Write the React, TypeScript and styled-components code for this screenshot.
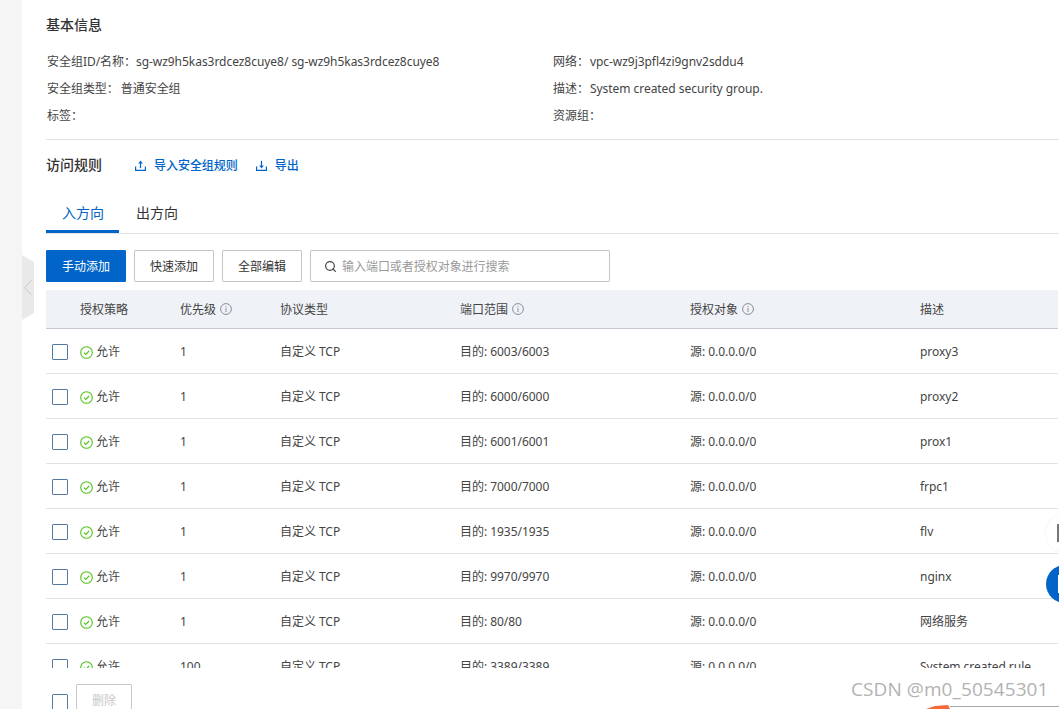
import styled, { createGlobalStyle } from "styled-components"
import { Search } from "lucide-react"

type Rule = {
  priority: string
  port: string
  desc: string
}

const rules: Rule[] = [
  { priority: "1", port: "6003/6003", desc: "proxy3" },
  { priority: "1", port: "6000/6000", desc: "proxy2" },
  { priority: "1", port: "6001/6001", desc: "prox1" },
  { priority: "1", port: "7000/7000", desc: "frpc1" },
  { priority: "1", port: "1935/1935", desc: "flv" },
  { priority: "1", port: "9970/9970", desc: "nginx" },
  { priority: "1", port: "80/80", desc: "网络服务" },
  { priority: "100", port: "3389/3389", desc: "System created rule." },
]

const InfoIcon = () => (
  <InfoSvg viewBox="0 0 12 12" width="12" height="12">
    <circle cx="6" cy="6" r="5.4" fill="none" stroke="#8a8f96" strokeWidth="1" />
    <path d="M6 5.2V9M6 3.2v1" stroke="#8a8f96" strokeWidth="1" fill="none" />
  </InfoSvg>
)

const AllowIcon = () => (
  <AllowSvg viewBox="0 0 13 13" width="13" height="13">
    <circle cx="6.5" cy="6.5" r="5.8" fill="none" stroke="#52c41a" strokeWidth="1.1" />
    <path d="M3.9 6.6l1.9 1.9 3.3-3.5" fill="none" stroke="#52c41a" strokeWidth="1.1" />
  </AllowSvg>
)

const UploadIcon = () => (
  <svg viewBox="0 0 11 11" width="11" height="11">
    <path d="M.6 6.5v3.9h9.8V6.5" fill="none" stroke="#0064c8" strokeWidth="1.2" />
    <path d="M5.5 8.2V2.5" fill="none" stroke="#0064c8" strokeWidth="1.2" />
    <path d="M5.5.6L7.8 3.4H3.2z" fill="#0064c8" />
  </svg>
)

const DownloadIcon = () => (
  <svg viewBox="0 0 11 11" width="11" height="11">
    <path d="M.6 6.5v3.9h9.8V6.5" fill="none" stroke="#0064c8" strokeWidth="1.2" />
    <path d="M5.5 .8v5" fill="none" stroke="#0064c8" strokeWidth="1.2" />
    <path d="M5.5 8.6L7.8 5.4H3.2z" fill="#0064c8" />
  </svg>
)

const RuleRow = ({ rule }: { rule: Rule }) => (
  <Row>
    <Checkbox />
    <Status>
      <AllowIcon />
      允许
    </Status>
    <Cell>{rule.priority}</Cell>
    <Cell>自定义 TCP</Cell>
    <Cell>目的: {rule.port}</Cell>
    <Cell>源: 0.0.0.0/0</Cell>
    <Cell>{rule.desc}</Cell>
  </Row>
)

export default function App() {
  return (
    <Page>
      <GlobalStyle />
      <Gutter />
      <Handle viewBox="0 0 12 65" width="12" height="65">
        <path d="M0 0l12 7v51l-12 7z" fill="#e9e9e9" />
        <path d="M9.5 25l-7 7.5 7 7.5" fill="none" stroke="#c9c9c9" strokeWidth="1" />
      </Handle>
      <Main>
        <SectionTitle>基本信息</SectionTitle>
        <InfoGrid>
          <InfoItem>安全组ID/名称：sg-wz9h5kas3rdcez8cuye8/ sg-wz9h5kas3rdcez8cuye8</InfoItem>
          <InfoItem>网络：<InfoValue $gap={1}>vpc-wz9j3pfl4zi9gnv2sddu4</InfoValue></InfoItem>
          <InfoItem>
            安全组类型：<InfoValue $gap={2}>普通安全组</InfoValue>
          </InfoItem>
          <InfoItem>描述：<InfoValue $gap={1}>System created security group.</InfoValue></InfoItem>
          <InfoItem>标签：</InfoItem>
          <InfoItem>资源组：</InfoItem>
        </InfoGrid>
        <Divider />
        <RulesHead>
          <RulesTitle>访问规则</RulesTitle>
          <RulesLink>
            <UploadIcon />
            导入安全组规则
          </RulesLink>
          <RulesLink>
            <DownloadIcon />
            导出
          </RulesLink>
        </RulesHead>
        <Tabs>
          <Tab $active>入方向</Tab>
          <Tab>出方向</Tab>
        </Tabs>
        <Toolbar>
          <Button $primary>手动添加</Button>
          <Button>快速添加</Button>
          <Button>全部编辑</Button>
          <SearchBox>
            <Search size={13} color="#444" strokeWidth={2.2} />
            <SearchText>输入端口或者授权对象进行搜索</SearchText>
          </SearchBox>
        </Toolbar>
        <HeadRow>
          <span />
          <HeadCell>授权策略</HeadCell>
          <HeadCell>
            优先级
            <InfoIcon />
          </HeadCell>
          <HeadCell>协议类型</HeadCell>
          <HeadCell>
            端口范围
            <InfoIcon />
          </HeadCell>
          <HeadCell>
            授权对象
            <InfoIcon />
          </HeadCell>
          <HeadCell>描述</HeadCell>
        </HeadRow>
        <Rows>
          {rules.map((rule) => (
            <RuleRow key={rule.port} rule={rule} />
          ))}
        </Rows>
        <Footer>
          <FooterCheck />
          <DeleteButton>删除</DeleteButton>
        </Footer>
      </Main>
      <FloatButton>
        <FloatGlyph />
      </FloatButton>
      <FloatButton $blue>
        <FloatGlyph $blue />
      </FloatButton>
      <Watermark>CSDN @m0_50545301</Watermark>
      <ArrowTip viewBox="0 0 24 4" width="24" height="4">
        <path d="M0 4L9 1l13-1 2 4z" fill="#f4683a" />
      </ArrowTip>
      <FrameLine />
    </Page>
  )
}

const GlobalStyle = createGlobalStyle`
  html, body {
    margin: 0;
    padding: 0;
    background: #fff;
  }
`

const Page = styled.div`
  position: relative;
  display: flex;
  width: 1059px;
  height: 709px;
  overflow: hidden;
  background: #fff;
  color: #333;
  font-family: "Noto Sans", "Noto Sans CJK SC", sans-serif;
  font-size: 12px;
  letter-spacing: -0.04px;
`

const Gutter = styled.div`
  flex: none;
  width: 22px;
  background: #f5f5f5;
`

const Handle = styled.svg`
  position: absolute;
  left: 22px;
  top: 255px;
`

const Main = styled.div`
  flex: 1;
  min-width: 0;
  padding: 0 1px 0 24px;
`

const SectionTitle = styled.div`
  height: 20px;
  margin-top: 15px;
  line-height: 20px;
  font-size: 14px;
  font-weight: 500;
`

const InfoGrid = styled.div`
  display: grid;
  grid-template-columns: 506px 1fr;
  grid-auto-rows: 27px;
  margin-top: 13px;
  padding-left: 1px;
`

const InfoItem = styled.div`
  line-height: 27px;
  color: #444;
`

const InfoValue = styled.span<{ $gap: number }>`
  margin-left: ${(p) => p.$gap}px;
`

const Divider = styled.div`
  height: 1px;
  margin-top: 10px;
  margin-right: -1px;
  background: #e3e3e3;
`

const RulesHead = styled.div`
  display: flex;
  align-items: center;
  height: 49px;
`

const RulesTitle = styled.div`
  width: 89px;
  margin-top: -1px;
  font-size: 14px;
  font-weight: 500;
`

const RulesLink = styled.a`
  display: flex;
  align-items: center;
  gap: 8px;
  margin: 1px 18px 0 0;
  color: #0064c8;
  font-weight: 500;
`

const Tabs = styled.div`
  display: flex;
  height: 44px;
  margin-right: -1px;
  border-bottom: 1px solid #e3e3e3;
`

const Tab = styled.div<{ $active?: boolean }>`
  box-sizing: border-box;
  width: 73px;
  height: 44px;
  margin-left: ${(p) => (p.$active ? "0" : "1px")};
  padding: 14px 0 0 1px;
  line-height: 20px;
  text-align: center;
  font-size: 14px;
  color: ${(p) => (p.$active ? "#0064c8" : "#333")};
  border-bottom: 3px solid ${(p) => (p.$active ? "#0064c8" : "transparent")};
`

const Toolbar = styled.div`
  display: flex;
  gap: 8px;
  height: 32px;
  margin-top: 16px;
`

const Button = styled.button<{ $primary?: boolean }>`
  box-sizing: border-box;
  width: 80px;
  height: 32px;
  padding: 0;
  border: 1px solid ${(p) => (p.$primary ? "#0064c8" : "#c4c6cc")};
  border-radius: 1px;
  background: ${(p) => (p.$primary ? "#0064c8" : "#fff")};
  color: ${(p) => (p.$primary ? "#fff" : "#333")};
  font: inherit;
`

const SearchBox = styled.div`
  box-sizing: border-box;
  display: flex;
  align-items: center;
  gap: 5px;
  width: 300px;
  height: 32px;
  padding-left: 13px;
  border: 1px solid #c4c6cc;
  border-radius: 1px;
`

const SearchText = styled.span`
  color: #9a9a9a;
`

const HeadRow = styled.div`
  box-sizing: border-box;
  display: grid;
  grid-template-columns: 34px 100px 100px 180px 230px 230px 1fr;
  align-items: center;
  height: 39px;
  margin-top: 8px;
  background: #eff2f7;
  border-bottom: 1px solid #c5cad3;
`

const HeadCell = styled.div`
  display: flex;
  align-items: center;
  gap: 4px;
  color: #444;
`

const InfoSvg = styled.svg`
  flex: none;
`

const Rows = styled.div`
  height: 339px;
  overflow: hidden;
`

const Row = styled.div`
  box-sizing: border-box;
  display: grid;
  grid-template-columns: 34px 100px 100px 180px 230px 230px 1fr;
  align-items: center;
  height: 45px;
  border-bottom: 1px solid #e3e3e3;
`

const Checkbox = styled.span`
  box-sizing: border-box;
  width: 16px;
  height: 16px;
  margin: 1px 0 0 6px;
  border: 1px solid #557aa0;
  border-radius: 1px;
`

const Status = styled.div`
  display: flex;
  align-items: center;
  gap: 3px;
  color: #444;
`

const AllowSvg = styled.svg`
  flex: none;
  margin-top: 2px;
`

const Cell = styled.div`
  color: #444;
  white-space: nowrap;
`

const Footer = styled.div`
  display: flex;
  align-items: flex-start;
  gap: 8px;
  margin-top: 16px;
  padding-left: 6px;
`

const FooterCheck = styled(Checkbox)`
  margin: 10px 0 0;
`

const DeleteButton = styled.button`
  box-sizing: border-box;
  width: 56px;
  height: 32px;
  padding: 0;
  border: 1px solid #c8c8c8;
  border-radius: 1px;
  background: #fff;
  color: #c8c8c8;
  font: inherit;
`

const FloatButton = styled.div<{ $blue?: boolean }>`
  position: absolute;
  left: 1046px;
  top: ${(p) => (p.$blue ? "565px" : "514px")};
  width: 38px;
  height: 38px;
  border-radius: 50%;
  background: ${(p) => (p.$blue ? "#0064c8" : "#fff")};
  box-shadow: 0 0 3px rgba(0, 0, 0, ${(p) => (p.$blue ? "0" : "0.08")});
`

const FloatGlyph = styled.div<{ $blue?: boolean }>`
  position: absolute;
  left: ${(p) => (p.$blue ? "12px" : "11px")};
  top: 10px;
  box-sizing: border-box;
  width: 16px;
  height: 18px;
  background: ${(p) => (p.$blue ? "#fff" : "transparent")};
  border: ${(p) => (p.$blue ? "none" : "2px solid #777")};
`

const Watermark = styled.div`
  position: absolute;
  left: 851px;
  top: 675px;
  line-height: 28px;
  font-family: "Open Sans", sans-serif;
  font-size: 19px;
  letter-spacing: 0.08px;
  color: #b2b2b2;
  white-space: nowrap;
`

const ArrowTip = styled.svg`
  position: absolute;
  left: 926px;
  top: 705px;
`

const FrameLine = styled.div`
  position: absolute;
  left: 950px;
  top: 706px;
  width: 109px;
  height: 1px;
  background: #a8a8a8;
`
